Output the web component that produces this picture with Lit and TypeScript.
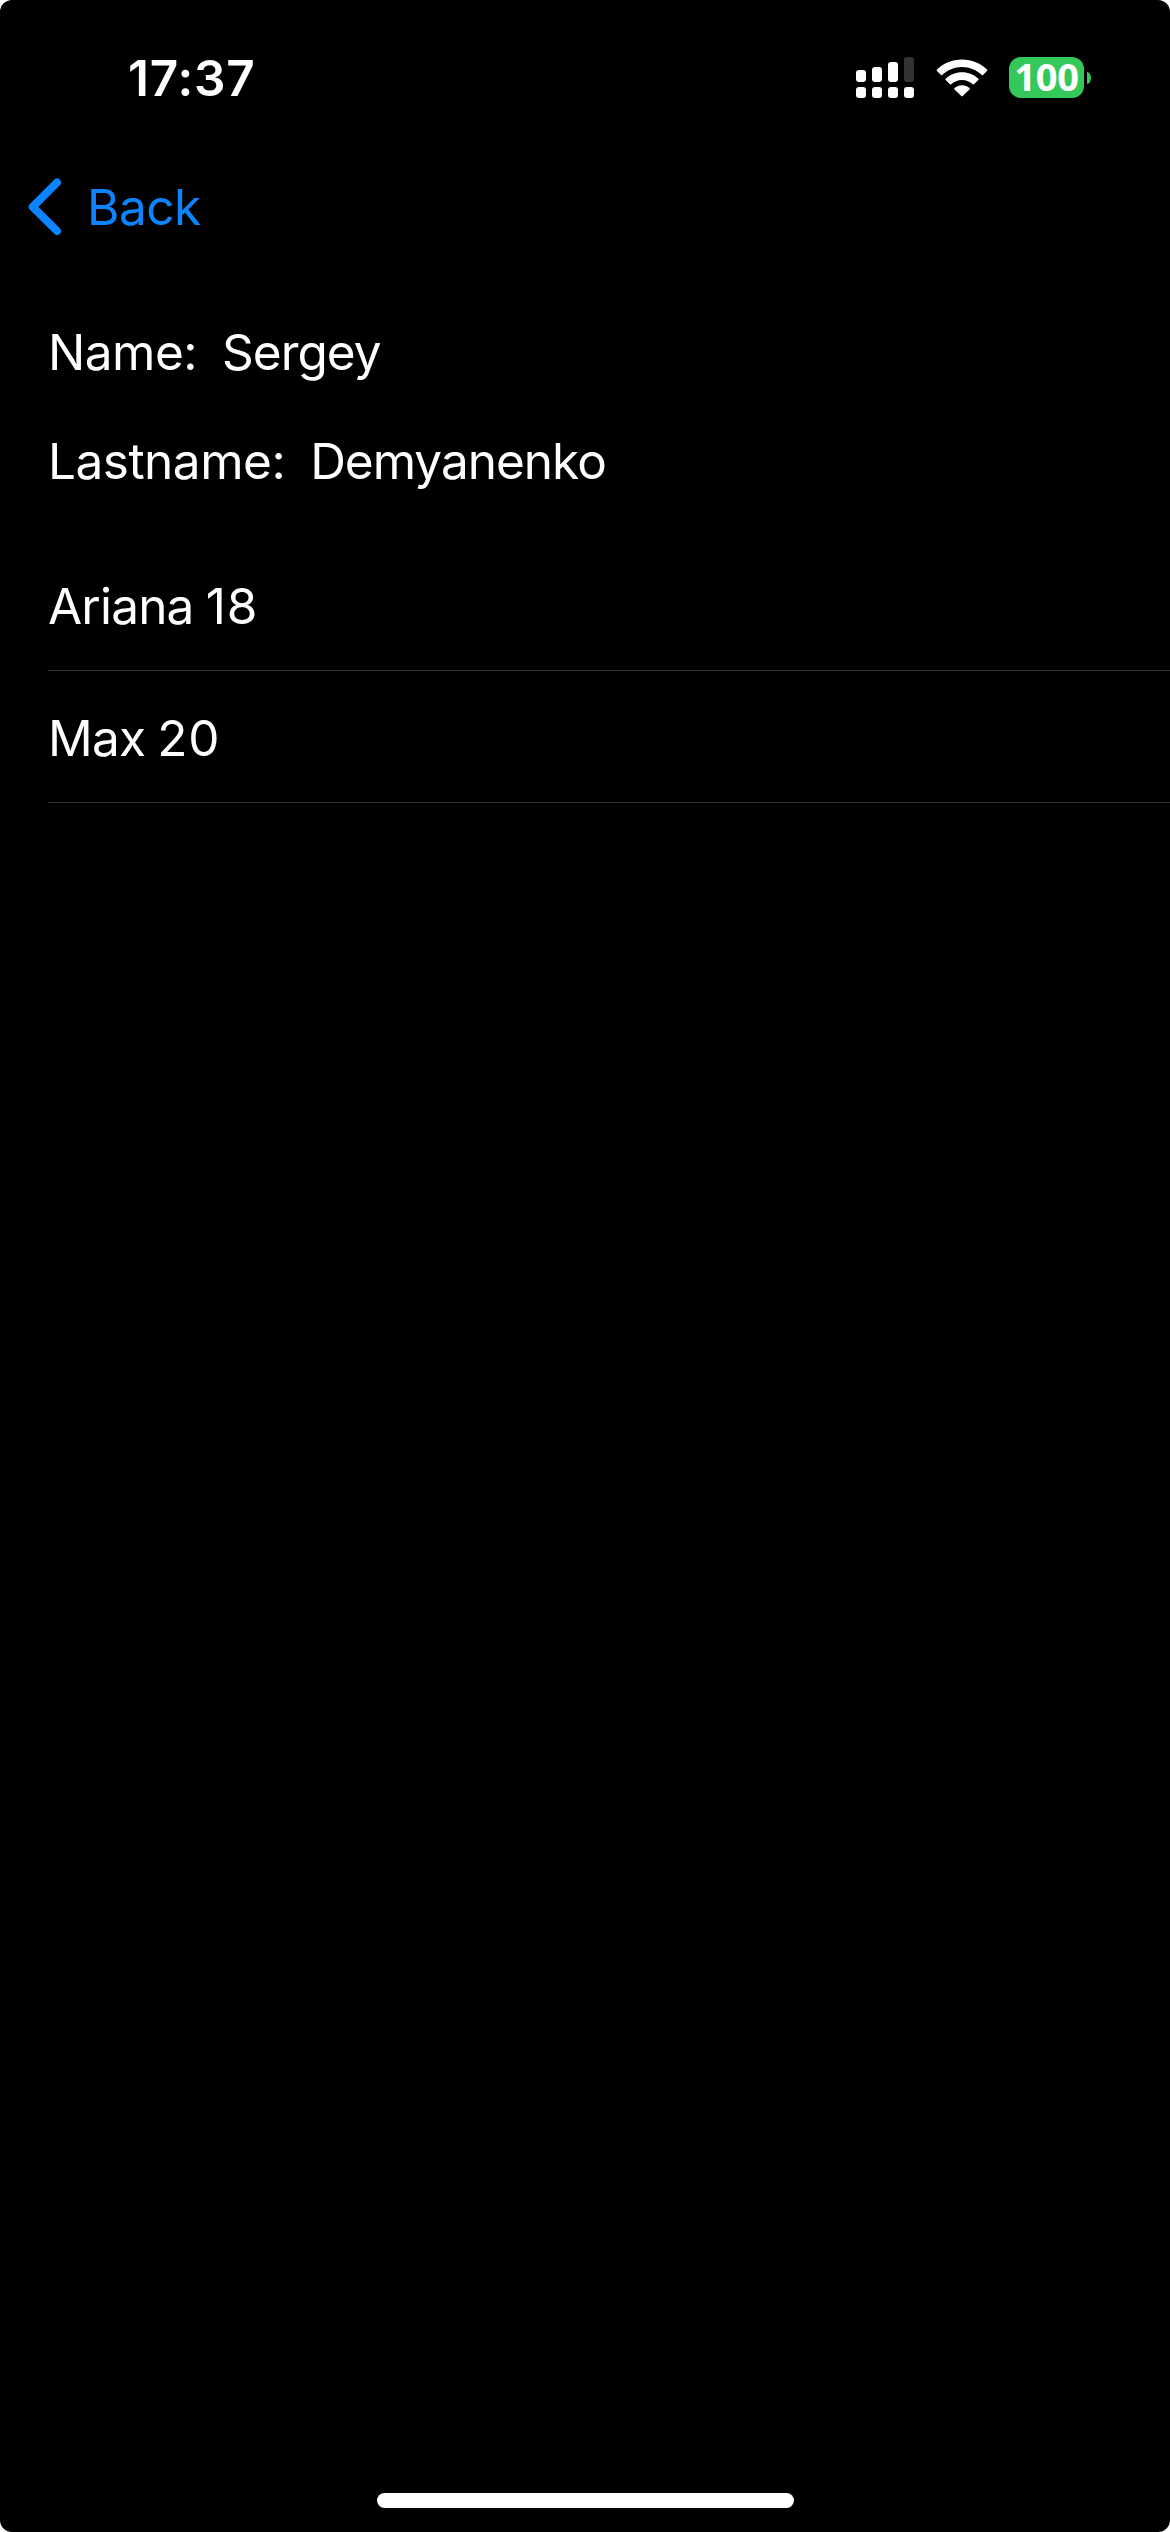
import { LitElement, html, css, svg } from "lit";
import { customElement, property } from "lit/decorators.js";

interface Child {
  name: string;
  age: number;
}

@customElement("status-bar")
class StatusBar extends LitElement {
  static styles = css`
    :host {
      display: flex;
      justify-content: space-between;
      align-items: center;
      height: 156px;
      padding: 0 79px 0 128px;
      box-sizing: border-box;
    }
    .time {
      font-size: 49.5px;
      font-weight: 600;
      line-height: 60px;
      letter-spacing: 0.8px;
    }
    .icons {
      display: flex;
      align-items: center;
      padding-bottom: 1px;
    }
    .signal {
      width: 58px;
      height: 41px;
      margin-right: 22px;
    }
    .wifi {
      width: 52px;
      height: 38px;
      margin-right: 21px;
    }
    .battery {
      display: flex;
      align-items: center;
      gap: 3px;
    }
    .level {
      width: 75px;
      height: 41px;
      border-radius: 12px;
      background: #34c759;
      font: 700 38px/39px "Open Sans", "Noto Sans", sans-serif;
      letter-spacing: -0.2px;
      text-align: center;
    }
    .nub {
      width: 4px;
      height: 12px;
      border-radius: 0 4px 4px 0 / 0 6px 6px 0;
      background: #34c759;
    }
  `;

  render() {
    const tops = [13, 10, 5, 0];
    return html`
      <span class="time">17:37</span>
      <div class="icons">
        <svg class="signal" viewBox="0 0 58 41">
          ${tops.map(
            (top, i) => svg`
              <rect x=${i * 16} y=${top} width="10" height=${25 - top} rx="3" fill=${i === 3 ? "#333" : "#fff"} />
              <rect x=${i * 16} y="30" width="10" height="11" rx="3" fill="#fff" />`
          )}
        </svg>
        <svg class="wifi" viewBox="0 0 52 38" fill="#fff">
          <path d="M26 .5C35.700 .5 44.500 4.300 51 10.500Q51.800 11.200 51 12L47 16Q46.400 16.500 45.800 16C40.600 11.200 33.600 8 26 8S11.400 11.200 6.200 16Q5.600 16.500 5 16L1 12Q.2 11.200 1 10.500C7.500 4.300 16.300 .5 26 .5Z" />
          <path d="M26 13.300C32.300 13.300 38 15.700 42.300 19.700Q43 20.400 42.300 21.100L38 25.300Q37.400 25.900 36.800 25.300C33.900 22.800 30.200 21 26 21S18.100 22.800 15.200 25.300Q14.600 25.900 14 25.300L9.700 21.100Q9 20.400 9.700 19.700C14 15.700 19.700 13.300 26 13.300Z" />
          <path d="M26 26.200C29 26.200 31.500 27.300 33.500 29Q34.200 29.700 33.500 30.400L26.700 37.100Q26 37.800 25.300 37.100L18.500 30.400Q17.800 29.700 18.500 29C20.500 27.300 23 26.200 26 26.200Z" />
        </svg>
        <div class="battery">
          <div class="level">100</div>
          <div class="nub"></div>
        </div>
      </div>
    `;
  }
}

@customElement("nav-bar")
class NavBar extends LitElement {
  static styles = css`
    :host {
      display: flex;
      align-items: center;
      height: 102px;
      padding-left: 28px;
      color: #0a84ff;
    }
    .chevron {
      width: 34px;
      height: 58px;
      margin-right: 25px;
    }
    .label {
      line-height: 60px;
      letter-spacing: -0.5px;
    }
  `;

  render() {
    return html`
      <svg class="chevron" viewBox="0 0 34 58">
        <path d="M29 4.500L4.700 28.800L29 53" fill="none" stroke="currentColor" stroke-width="8" stroke-linecap="round" stroke-linejoin="round" />
      </svg>
      <span class="label">Back</span>
    `;
  }
}

@customElement("person-field")
class PersonField extends LitElement {
  @property() label = "";
  @property() value = "";

  static styles = css`
    :host {
      display: flex;
      align-items: center;
      height: 109px;
      gap: 25px;
    }
    .label {
      letter-spacing: -0.5px;
    }
    .value {
      letter-spacing: -1px;
    }
  `;

  render() {
    return html`<span class="label">${this.label}:</span><span class="value">${this.value}</span>`;
  }
}

@customElement("app-root")
class AppRoot extends LitElement {
  private people: Child[] = [
    { name: "Ariana", age: 18 },
    { name: "Max", age: 20 },
  ];

  static styles = css`
    :host {
      display: block;
      background: #fff;
    }
    .screen {
      display: flex;
      flex-direction: column;
      height: 2532px;
      box-sizing: border-box;
      padding-bottom: 24px;
      border-radius: 12px;
      background: #000;
      color: #fff;
      font-family: Inter, "Liberation Sans", sans-serif;
      font-size: 49.5px;
      line-height: 60px;
    }
    .person {
      padding: 39px 48px 24px;
    }
    .list {
      flex: 1;
      margin: 0;
      padding: 0 0 0 48px;
      list-style: none;
    }
    .row {
      display: flex;
      align-items: center;
      height: 132px;
      box-sizing: border-box;
      padding-top: 2px;
      border-bottom: 1px solid #323234;
      letter-spacing: -0.8px;
      word-spacing: -1px;
    }
    .age {
      letter-spacing: 0.8px;
    }
    .home {
      align-self: center;
      width: 417px;
      height: 15px;
      border-radius: 8px;
      background: #fff;
    }
  `;

  render() {
    return html`
      <main class="screen">
        <status-bar></status-bar>
        <nav-bar></nav-bar>
        <section class="person">
          <person-field label="Name" value="Sergey"></person-field>
          <person-field label="Lastname" value="Demyanenko"></person-field>
        </section>
        <ul class="list">
          ${this.people.map(
            (c) => html`<li class="row"><span>${c.name} <span class="age">${c.age}</span></span></li>`
          )}
        </ul>
        <div class="home"></div>
      </main>
    `;
  }
}
